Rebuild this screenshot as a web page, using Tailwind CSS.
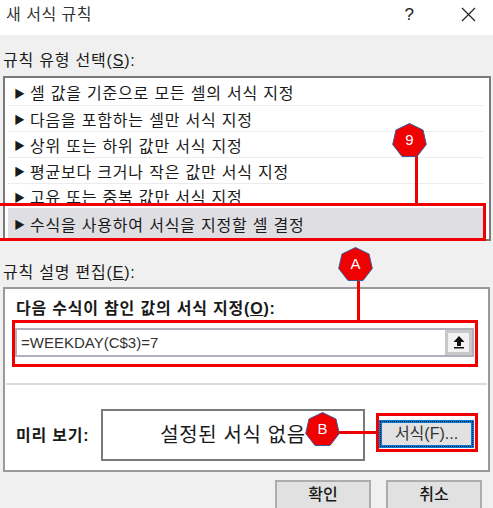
<!DOCTYPE html>
<html lang="ko">
<head>
  <meta charset="UTF-8">
  <title>새 서식 규칙</title>
  <script src="https://cdn.jsdelivr.net/npm/@tailwindcss/browser@4"></script>
</head>
<body class="bg-[#f0f0f0] text-[#1a1a1a] font-['Liberation_Sans','Noto_Sans_CJK_KR',sans-serif] overflow-hidden">
  <div class="relative w-[493px] h-[508px] overflow-hidden">

    <!-- Title bar -->
    <div class="h-[35px] bg-white flex items-center pl-[6px] pb-[6px]">
      <span class="text-[16px] tracking-[0.5px] text-[#333]">새 서식 규칙</span>
      <span class="ml-auto text-[17px]">?</span>
      <svg class="ml-[47px] mr-[17px]" width="15" height="15" viewBox="0 0 15 15"><path d="M1 1L14 14M14 1L1 14" stroke="#222" stroke-width="1.2"/></svg>
    </div>

    <!-- Rule type -->
    <div class="pl-[3px] pt-[15px] h-[41px] text-[16px] leading-[22px] tracking-[0.8px]">규칙 유형 선택(<span class="underline">S</span>):</div>
    <div class="ml-[3px] w-[488px] h-[165px] border-2 border-[#7a7a7a] bg-white pl-[3px] pr-[5px] text-[16px] tracking-[0.8px]">
      <div class="h-[28px] flex items-center border-b border-[#ececec] pl-[6px] pt-[5px]"><span class="text-[11px] w-[16px]">▶</span>셀 값을 기준으로 모든 셀의 서식 지정</div>
      <div class="h-[26px] flex items-center border-b border-[#ececec] pl-[6px] pt-[4px]"><span class="text-[11px] w-[16px]">▶</span>다음을 포함하는 셀만 서식 지정</div>
      <div class="h-[26px] flex items-center border-b border-[#ececec] pl-[6px] pt-[4px]"><span class="text-[11px] w-[16px]">▶</span>상위 또는 하위 값만 서식 지정</div>
      <div class="h-[26px] flex items-center border-b border-[#ececec] pl-[6px] pt-[4px]"><span class="text-[11px] w-[16px]">▶</span>평균보다 크거나 작은 값만 서식 지정</div>
      <div class="h-[24px] flex items-center pl-[6px] pt-[4px]"><span class="text-[11px] w-[16px]">▶</span>고유 또는 중복 값만 서식 지정</div>
      <div class="h-[30px] flex items-center bg-[#dfdee3] pl-[6px] pt-[5px]"><span class="text-[11px] w-[16px]">▶</span>수식을 사용하여 서식을 지정할 셀 결정</div>
    </div>

    <!-- Rule description -->
    <div class="pl-[3px] pt-[21px] h-[46px] text-[16px] leading-[22px] tracking-[0.8px]">규칙 설명 편집(<span class="underline">E</span>):</div>
    <div class="ml-[3px] w-[487px] h-[185px] border-2 border-[#9a9a9a] bg-white flex flex-col">
      <div class="pl-[11px] pt-[9px] h-[39px] text-[16px] leading-[22px] font-bold tracking-[0.8px]">다음 수식이 참인 값의 서식 지정(<span class="underline">O</span>):</div>
      <div class="ml-[10px] w-[459px] h-[29px] border-2 border-[#b0b0b8] flex items-center">
        <span class="pl-[4px] pt-[1px] text-[15px] text-[#333]">=WEEKDAY(C$3)=7</span>
        <div class="ml-auto w-[27px] h-[25px] border-[3px] border-[#c8c8c8] bg-[#f2f2f2] flex items-center justify-center">
          <svg width="12" height="13" viewBox="0 0 12 13"><path d="M6 0L11.5 6H8V10H4V6H.5Z M1 11H11V12.5H1Z" fill="#111"/></svg>
        </div>
      </div>
      <div class="mt-[26px] mx-[1px] h-[2px] bg-[#dcdcdc]"></div>
      <div class="flex items-start pl-[11px] pt-[24px]">
        <span class="w-[85px] pt-[16px] text-[16px] leading-[22px] font-bold tracking-[0.8px]">미리 보기:</span>
        <div class="w-[264px] h-[52px] border-2 border-[#7a7a7a] flex items-center justify-center text-[20px] tracking-[0.6px]">설정된 서식 없음</div>
        <button class="ml-[14px] mt-[11px] w-[95px] h-[28px] border-[3px] border-[#0a78d7] bg-[#e1e1e1] text-[16px] text-[#333] flex items-center justify-center outline-1 outline-dotted outline-[#222] -outline-offset-2">서식(F)...</button>
      </div>
    </div>

    <!-- Footer -->
    <div class="flex pl-[275px] pt-[8px] gap-[15px]">
      <button class="w-[96px] h-[30px] border-2 border-[#adadad] bg-[#e1e1e1] text-[16px] font-medium">확인</button>
      <button class="w-[96px] h-[30px] border-2 border-[#adadad] bg-[#e1e1e1] text-[16px] font-medium">취소</button>
    </div>

    <!-- Annotations -->
    <div class="absolute left-[-4px] top-[203px] w-[490px] h-[38px] border-[3px] border-[#f00000]"></div>
    <div class="absolute left-[12px] top-[320px] w-[466px] h-[47px] border-[3px] border-[#f00000]"></div>
    <div class="absolute left-[376px] top-[413px] w-[102px] h-[39px] border-[3px] border-[#f00000]"></div>
    <div class="absolute left-[415px] top-[155px] w-[3px] h-[49px] bg-[#f00000]"></div>
    <div class="absolute left-[357px] top-[280px] w-[3px] h-[41px] bg-[#f00000]"></div>
    <div class="absolute left-[336px] top-[431px] w-[41px] h-[3px] bg-[#f00000]"></div>

    <div class="absolute left-[392px] top-[123px] w-[35px] h-[35px] flex items-center justify-center text-white text-[15px]">
      <svg class="absolute inset-0" viewBox="0 0 35 35"><polygon points="17.5,0.5 31,7 34.3,21.5 25,33.5 10,33.5 0.7,21.5 4,7" fill="#f00000" stroke="#3a5a9a"/></svg>
      <span class="relative">9</span>
    </div>
    <div class="absolute left-[338px] top-[247px] w-[35px] h-[35px] flex items-center justify-center text-white text-[15px]">
      <svg class="absolute inset-0" viewBox="0 0 35 35"><polygon points="17.5,0.5 31,7 34.3,21.5 25,33.5 10,33.5 0.7,21.5 4,7" fill="#f00000" stroke="#3a5a9a"/></svg>
      <span class="relative">A</span>
    </div>
    <div class="absolute left-[305px] top-[412px] w-[35px] h-[35px] flex items-center justify-center text-white text-[15px]">
      <svg class="absolute inset-0" viewBox="0 0 35 35"><polygon points="17.5,0.5 31,7 34.3,21.5 25,33.5 10,33.5 0.7,21.5 4,7" fill="#f00000" stroke="#3a5a9a"/></svg>
      <span class="relative">B</span>
    </div>
  </div>
</body>
</html>
